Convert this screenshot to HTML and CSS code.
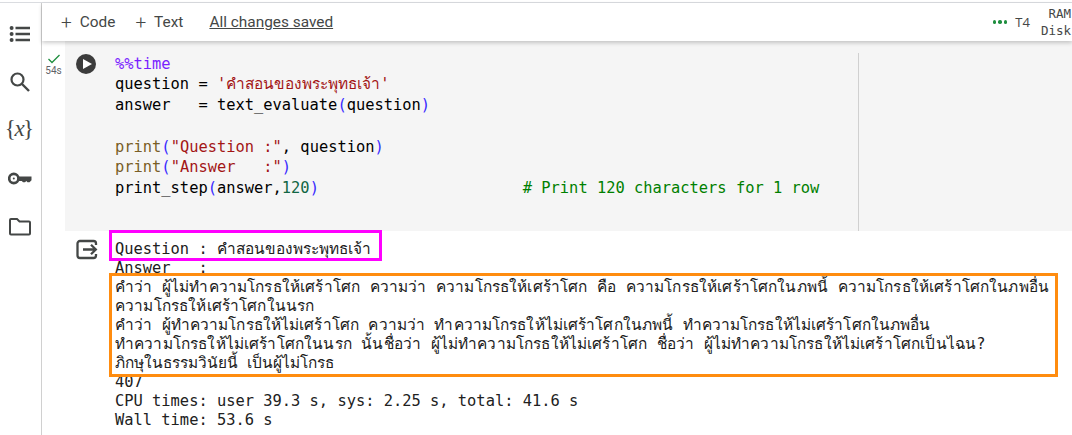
FILE: index.html
```html
<!DOCTYPE html>
<html lang="th">
<head>
<meta charset="utf-8">
<title>Colab</title>
<link rel="stylesheet" href="styles.css">
</head>
<body>
<div class="app">
  <nav class="rail">
    <svg class="ri" width="24" height="24" viewBox="0 0 24 24"><path d="M7.500 4.800h14.500v2.400H7.500zM7.500 10.800h14.500v2.400H7.500zM7.500 16.800h14.500v2.400H7.500z" fill="#444746"/><circle cx="3.600" cy="6" r="2" fill="#444746"/><circle cx="3.600" cy="12" r="2" fill="#444746"/><circle cx="3.600" cy="18" r="2" fill="#444746"/></svg>
    <svg class="ri" width="24" height="24" viewBox="0 0 24 24"><circle cx="9.500" cy="9.500" r="6" fill="none" stroke="#444746" stroke-width="2.200"/><path d="M14 14l7 7" stroke="#444746" stroke-width="2.400" fill="none"/></svg>
    <div class="ri vars">{<i>x</i>}</div>
    <svg class="ri" width="24" height="24" viewBox="0 0 24 24"><circle cx="5.800" cy="11.500" r="4.600" fill="none" stroke="#444746" stroke-width="2.600"/><circle cx="5.800" cy="11.500" r="1" fill="#444746"/><path d="M10.500 9.500h13v3.800l-2 2h-2l-1.200-1.300-1.300 1.300h-2l-1.200-1.300h-3.300z" fill="#444746"/></svg>
    <svg class="ri" width="24" height="24" viewBox="0 0 24 24"><path d="M2 5a1 1 0 0 1 1-1h6l2.500 2.500h9.500a1 1 0 0 1 1 1v11a1 1 0 0 1-1 1h-18a1 1 0 0 1-1-1z" fill="none" stroke="#444746" stroke-width="2"/></svg>
  </nav>
  <div class="main">
    <header class="toolbar">
      <button class="tb"><span class="plus">+</span>Code</button>
      <button class="tb"><span class="plus">+</span>Text</button>
      <span class="saved">All changes saved</span>
      <span class="spacer"></span>
      <span class="dots"><b></b><b></b><b></b></span>
      <span class="t4">T4</span>
      <span class="res"><span>RAM</span><span>Disk</span></span>
    </header>
    <section class="cell">
      <div class="gutter">
        <svg width="16" height="12" viewBox="0 0 16 12"><path d="M2.500 6l3.500 3.500 7.500-7.500" fill="none" stroke="#1e8e3e" stroke-width="1.300"/></svg>
        <span class="dur">54s</span>
      </div>
      <div class="runwrap">
        <svg width="20" height="20" viewBox="0 0 20 20"><circle cx="10" cy="10" r="10" fill="#3c3c3c"/><path d="M7 5l9 5-9 5z" fill="#fff"/></svg>
      </div>
      <pre class="code"><span class="m">%%time</span>
question = <span class="s">'คำสอนของพระพุทธเจ้า'</span>
answer   = text_evaluate<span class="b">(</span>question<span class="b">)</span>

<span class="f">print</span><span class="b">(</span><span class="s">"Question :"</span>, question<span class="b">)</span>
<span class="f">print</span><span class="b">(</span><span class="s">"Answer   :"</span><span class="b">)</span>
print_step<span class="b">(</span>answer,<span class="n">120</span><span class="b">)</span>                      <span class="c"># Print 120 characters for 1 row</span></pre>
      <div class="ruler"></div>
    </section>
    <section class="output">
      <div class="outicon">
        <svg width="22" height="21" viewBox="0 0 22 21"><path d="M10 2H4a2.500 2.500 0 0 0-2.500 2.500v12A2.500 2.500 0 0 0 4 19h13.500a2.500 2.500 0 0 0 2.500-2.500V15M20 6V4.500A2.500 2.500 0 0 0 17.500 2H10" fill="none" stroke="#444746" stroke-width="2.300"/><path d="M7 10.500h13M15 5.800l4.800 4.700-4.800 4.700" fill="none" stroke="#444746" stroke-width="2.300"/></svg>
      </div>
      <pre class="out">Question : คำสอนของพระพุทธเจ้า
Answer   :
<span class="th">คำว่า ผู้ไม่ทำความโกรธให้เศร้าโศก ความว่า ความโกรธให้เศร้าโศก คือ ความโกรธให้เศร้าโศกในภพนี้ ความโกรธให้เศร้าโศกในภพอื่น</span>
<span class="th">ความโกรธให้เศร้าโศกในนรก</span>
<span class="th2">คำว่า ผู้ทำความโกรธให้ไม่เศร้าโศก ความว่า ทำความโกรธให้ไม่เศร้าโศกในภพนี้ ทำความโกรธให้ไม่เศร้าโศกในภพอื่น</span>
<span class="th">ทำความโกรธให้ไม่เศร้าโศกในนรก นั้นชื่อว่า ผู้ไม่ทำความโกรธให้ไม่เศร้าโศก ชื่อว่า ผู้ไม่ทำความโกรธให้ไม่เศร้าโศกเป็นไฉน?</span>
ภิกษุในธรรมวินัยนี้ เป็นผู้ไม่โกรธ
407
CPU times: user 39.3 s, sys: 2.25 s, total: 41.6 s
Wall time: 53.6 s</pre>
      <div class="mark pink"></div>
      <div class="mark orange"></div>
    </section>
  </div>
</div>
</body>
</html>
```
FILE: styles.css
```css
* { box-sizing: border-box; }
html, body { margin: 0; height: 100%; overflow: hidden; background: #fff; }
.app { display: flex; height: 435px; margin-top: 2px; border-top: 1px solid #dadce0; }
.rail { width: 42px; flex: none; border-right: 1px solid #d0d0d0; display: flex; flex-direction: column; align-items: center; padding-top: 19px; gap: 24.300px; padding-right: 2px; }
.ri { display: block; flex: none; }
.vars { font: 23px/20px "Liberation Serif", serif; height: 24px; color: #444746; display: flex; justify-content: center; width: 28px; white-space: nowrap; }
.vars i { margin: 0 -1.500px; }
.main { flex: 1; min-width: 0; display: flex; flex-direction: column; }
.toolbar { height: 38px; flex: none; display: flex; align-items: center; padding-left: 19px; font: 15.400px Roboto, sans-serif; color: #444746; box-shadow: 0 2px 4px rgba(0,0,0,.2); position: relative; z-index: 2; background: #fff; }
.tb { border: 0; background: none; font: inherit; color: inherit; padding: 0; margin-right: 20px; display: flex; align-items: center; }
.plus { font-size: 19px; font-weight: 300; margin-right: 8px; line-height: 19px; }
.saved { text-decoration: underline; margin-left: 6px; }
.spacer { flex: 1; }
.dots { display: flex; gap: 2px; margin-right: 8px; }
.dots b { width: 3.500px; height: 3.500px; border-radius: 50%; background: #1e8e3e; }
.t4 { font: 13px "Open Sans", sans-serif; margin-right: 11px; }
.res { display: flex; flex-direction: column; align-items: flex-end; font: 12.500px/17px "DejaVu Sans Mono", monospace; margin-right: 1px; }
.cell { display: flex; height: 190px; flex: none; position: relative; }
.gutter { width: 23px; flex: none; display: flex; flex-direction: column; align-items: center; padding-top: 12px; }
.gutter svg { display: block; }
.dur { font: 10px/12px Roboto, sans-serif; color: #5f6368; }
.runwrap { flex: none; width: 50px; margin: 0; background: #f5f5f5; padding: 13px 0 0 11px; }
.code { flex: 1; margin: 0; background: #f5f5f5; padding-top: 12.500px; font: 15.400px/20.800px "DejaVu Sans Mono", "Noto Sans", monospace; color: #000; }
.m { color: #7a1fff; }
.s { color: #a31515; }
.b { color: #3a2cff; }
.f { color: #795e26; }
.n { color: #116644; }
.c { color: #008000; }
.ruler { position: absolute; left: 816px; top: 12px; bottom: 0; width: 1px; background: #d0d0d0; }
.output { display: flex; position: relative; flex: 1; min-height: 0; }
.outicon { width: 73px; flex: none; padding: 8px 0 0 34px; }
.outicon svg { display: block; }
.out { margin: 0; padding-top: 8.500px; font: 15.400px/19.100px "DejaVu Sans Mono", "Noto Sans", monospace; color: #212121; }
.th { letter-spacing: 0.155px; }
.th2 { letter-spacing: 0.11px; }
.mark { position: absolute; border-style: solid; border-width: 3px; }
.pink { border-color: #ff00ff; left: 67px; top: -1px; width: 273px; height: 31px; }
.orange { border-color: #ff8c0f; left: 67px; top: 42px; width: 949px; height: 104px; }
```
